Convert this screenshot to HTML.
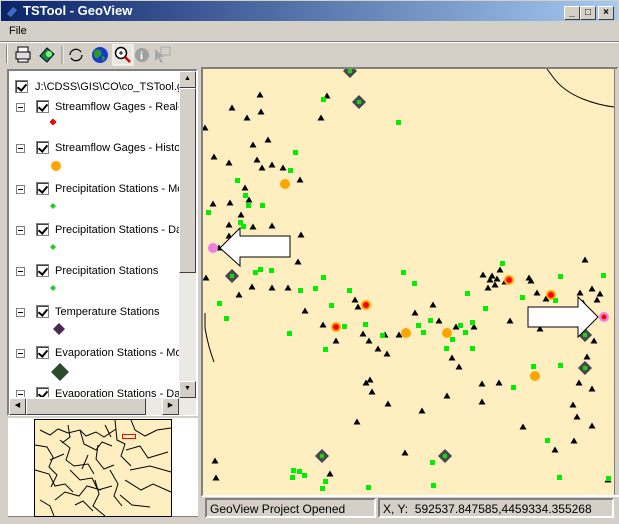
<!DOCTYPE html>
<html><head><style>
*{margin:0;padding:0;box-sizing:border-box}
body{width:619px;height:524px;background:#d4d0c8;font-family:"Liberation Sans",sans-serif;font-size:11px;position:relative;overflow:hidden}
.abs{position:absolute}
.title{left:0;top:0;width:619px;height:22px;background:linear-gradient(90deg,#0a246a,#a6caf0);border:1px solid #d4d0c8}
.title span{position:absolute;left:22px;top:2px;color:#fff;font-weight:bold;font-size:13px}
.wb{top:5px;width:16px;height:14px;background:#d4d0c8;border:1px solid;border-color:#fff #404040 #404040 #fff;font-size:10px;text-align:center;line-height:12px;font-weight:bold}
.sunk{border:2px solid;border-color:#808080 #fff #fff #808080}
.cb{width:13px;height:13px;border:1px solid #808080;background:#fff;box-shadow:inset 1px 1px #404040}
.cb:after{content:"";position:absolute;left:3px;top:1px;width:4px;height:7px;border:solid #000;border-width:0 2px 2px 0;transform:rotate(40deg)}
.ex{width:9px;height:9px;border:1px solid #808080;background:#fff}
.ex:after{content:"";position:absolute;left:1px;top:3px;width:5px;height:1px;background:#000}
.lbl{font-size:11px;white-space:nowrap;color:#000}
</style></head><body>
<div class="abs title"><span>TSTool - GeoView</span>
<svg class="abs" style="left:3px;top:3px" width="16" height="16"><polygon points="2,10 9,2 14,6 7,14" fill="#3a6ad0" stroke="#123" stroke-width="1"/></svg>
<div class="abs wb" style="left:563px">_</div><div class="abs wb" style="left:579px">□</div><div class="abs wb" style="left:597px">×</div>
</div>
<div class="abs" style="left:9px;top:25px;font-size:11px">File</div>
<div class="abs" style="left:0;top:41px;width:619px;height:2px;border-top:1px solid #808080;border-bottom:1px solid #fff"></div>
<div class="abs" style="left:6px;top:45px;width:2px;height:18px;border-left:1px solid #808080;border-right:1px solid #fff"></div>
<svg class="abs" style="left:14px;top:44px" width="160" height="22">
<rect x="2" y="8" width="14" height="7" fill="#ddd" stroke="#000"/><rect x="4" y="3" width="10" height="5" fill="#fff" stroke="#000"/><rect x="4" y="15" width="10" height="3" fill="#fff" stroke="#000"/>
<polygon points="26,12 33,4 40,10 33,18" fill="#1a8a3a" stroke="#003" /><circle cx="35" cy="10" r="3" fill="#7f7"/>
<line x1="48" y1="2" x2="48" y2="20" stroke="#808080"/><line x1="49" y1="2" x2="49" y2="20" stroke="#fff"/>
<path d="M56 11 a6 6 0 0 1 11 -3 M68 11 a6 6 0 0 1 -11 3" fill="none" stroke="#000" stroke-width="1.3"/>
<circle cx="86" cy="11" r="8" fill="#1a3ad0"/><path d="M80 7 q4 -3 7 0 q2 4 -2 6 q-3 3 -5 -1z M88 12 q3 0 3 3 l-3 2z" fill="#2a9a2a"/>
<rect x="99" y="0" width="20" height="21" fill="#e8e6e0" stroke="#fff"/><circle cx="107" cy="9" r="5.5" fill="#fff" stroke="#000" stroke-width="1.5"/><path d="M105 9h4M107 7v4" stroke="#000"/><line x1="111" y1="13" x2="116" y2="18" stroke="#c00" stroke-width="2.5"/>
<circle cx="128" cy="11" r="7" fill="#a0a0a0"/><text x="126" y="15" fill="#fff" font-size="11" font-weight="bold" font-family="Liberation Serif">i</text>
<path d="M141 5 l0 12 l3 -3 l3 5 l2 -1 l-3 -5 l4 0z" fill="#a8a8a8"/><rect x="147" y="3" width="9" height="8" fill="none" stroke="#a8a8a8"/>
</svg>
<!-- tree panel -->
<div class="abs sunk" style="left:7px;top:69px;width:191px;height:347px;background:#fff"></div>
<div class="abs" style="left:179px;top:71px;width:17px;height:327px;background:#ebe9e4"></div>
<div class="abs" style="left:179px;top:71px;width:17px;height:17px;background:#d4d0c8;border:1px solid;border-color:#fff #404040 #404040 #fff;font-size:7px;text-align:center;line-height:14px">▲</div>
<div class="abs" style="left:179px;top:88px;width:17px;height:185px;background:#d4d0c8;border:1px solid;border-color:#fff #404040 #404040 #fff"></div>
<div class="abs" style="left:179px;top:381px;width:17px;height:17px;background:#d4d0c8;border:1px solid;border-color:#fff #404040 #404040 #fff;font-size:7px;text-align:center;line-height:14px">▼</div>
<div class="abs" style="left:9px;top:398px;width:187px;height:17px;background:#ebe9e4"></div>
<div class="abs" style="left:9px;top:398px;width:17px;height:17px;background:#d4d0c8;border:1px solid;border-color:#fff #404040 #404040 #fff;font-size:7px;text-align:center;line-height:14px">◀</div>
<div class="abs" style="left:26px;top:398px;width:120px;height:17px;background:#d4d0c8;border:1px solid;border-color:#fff #404040 #404040 #fff"></div>
<div class="abs" style="left:162px;top:398px;width:17px;height:17px;background:#d4d0c8;border:1px solid;border-color:#fff #404040 #404040 #fff;font-size:7px;text-align:center;line-height:14px">▶</div>
<div class="abs" style="left:9px;top:72px;width:170px;height:325px;overflow:hidden">
<div class="abs cb" style="left:6px;top:8px"></div><div class="abs lbl" style="left:26px;top:9px">J:\CDSS\GIS\CO\co_TSTool.gvp</div>
<div class="abs ex" style="left:7px;top:31px"></div><div class="abs cb" style="left:27px;top:28px"></div><div class="abs lbl" style="left:46px;top:29px">Streamflow Gages - Real-Time</div>
<svg class="abs" style="left:40px;top:46px" width="10" height="10"><rect x="2" y="2" width="4" height="4" fill="#f00"/><rect x="3" y="1" width="2" height="6" fill="#f00"/><rect x="1" y="3" width="6" height="2" fill="#f00"/></svg>
<div class="abs ex" style="left:7px;top:72px"></div><div class="abs cb" style="left:27px;top:69px"></div><div class="abs lbl" style="left:46px;top:70px">Streamflow Gages - Historical</div>
<svg class="abs" style="left:40px;top:88px" width="14" height="14"><circle cx="7" cy="6" r="5" fill="#ffa500"/></svg>
<div class="abs ex" style="left:7px;top:113px"></div><div class="abs cb" style="left:27px;top:110px"></div><div class="abs lbl" style="left:46px;top:111px">Precipitation Stations - Monthly</div>
<svg class="abs" style="left:40px;top:130px" width="10" height="10"><polygon points="4,1 7,4 4,7 1,4" fill="#2c2"/></svg>
<div class="abs ex" style="left:7px;top:154px"></div><div class="abs cb" style="left:27px;top:151px"></div><div class="abs lbl" style="left:46px;top:152px">Precipitation Stations - Daily</div>
<svg class="abs" style="left:40px;top:171px" width="10" height="10"><polygon points="4,1 7,4 4,7 1,4" fill="#2c2"/></svg>
<div class="abs ex" style="left:7px;top:195px"></div><div class="abs cb" style="left:27px;top:192px"></div><div class="abs lbl" style="left:46px;top:193px">Precipitation Stations</div>
<svg class="abs" style="left:40px;top:212px" width="10" height="10"><polygon points="4,1 7,4 4,7 1,4" fill="#2c2"/></svg>
<div class="abs ex" style="left:7px;top:236px"></div><div class="abs cb" style="left:27px;top:233px"></div><div class="abs lbl" style="left:46px;top:234px">Temperature Stations</div>
<svg class="abs" style="left:42px;top:250px" width="16" height="16"><polygon points="8,1 14,7 8,13 2,7" fill="#4a2a50"/></svg>
<div class="abs ex" style="left:7px;top:277px"></div><div class="abs cb" style="left:27px;top:274px"></div><div class="abs lbl" style="left:46px;top:275px">Evaporation Stations - Monthly</div>
<svg class="abs" style="left:41px;top:290px" width="20" height="20"><polygon points="10,1 19,10 10,19 1,10" fill="#2c4a2c"/></svg>
<div class="abs ex" style="left:7px;top:318px"></div><div class="abs cb" style="left:27px;top:315px"></div><div class="abs lbl" style="left:46px;top:316px">Evaporation Stations - Daily</div>
</div>
<!-- overview -->
<div class="abs" style="left:8px;top:418px;width:190px;height:99px;background:#fff;border-bottom:1px solid #808080"></div>
<svg class="abs" style="left:0;top:0" width="200" height="524">
<rect x="34.5" y="419.5" width="137" height="97" fill="#ffefc0" stroke="#000"/>
<g fill="none" stroke="#000" stroke-width="1">
<path d="M40 430 l10 5 l8 -6 l10 4 l12 -3 l6 6 l10 -4 l8 5 l12 -8 M115 420 l2 20 l8 4 l-4 12 l10 10 M131 420 l4 10 l10 6 l12 -6 l14 -2 M126 450 l14 -4 l8 12 l20 -6 M130 470 l20 -4 l21 6 M125 480 l16 10 l12 -6 l18 8 M120 495 l12 10 l18 2 M35 445 l12 2 l6 10 l-4 10 l8 8 l-6 12 M60 440 l10 8 l-4 12 l8 6 l14 -2 l6 10 M80 430 l4 14 l12 6 l6 -8 l10 4 M98 445 l-2 14 l8 10 l10 -4 M35 470 l14 4 l6 12 l10 -2 l8 8 M55 500 l10 -8 l14 4 l8 -10 l14 4 M70 470 l10 10 l12 -2 l6 12 l14 -4 M95 480 l4 14 l-6 12 l12 10 M40 500 l10 6 l4 10 M75 505 l8 -4 l10 10 M110 470 l8 14 l-4 12 l8 10 M50 460 l14 -6 M88 455 l-6 14 M105 425 l6 12 M68 425 l2 12 l-8 6"/>
</g>
<rect x="122.5" y="434.5" width="13" height="4" fill="none" stroke="#f00"/>
</svg>
<!-- map -->
<div class="abs sunk" style="left:201px;top:67px;width:418px;height:430px;background:#ffefc0"></div>
<div class="abs" style="left:614px;top:69px;width:5px;height:426px;background:#d4d0c8;border-left:1px solid #808080"></div>
<svg class="abs" style="left:203px;top:69px" width="411" height="426" viewBox="203 69 411 426">
<defs>
<polygon id="t" points="0,-3.5 3.5,2.5 -3.5,2.5" fill="#000"/>
<rect id="g" x="-2" y="-2" width="5" height="5" fill="#0e0"/>
<g id="d"><polygon points="0,-7 7,0 0,7 -7,0" fill="#4a3a50"/><polygon points="0,-5 5,0 0,5 -5,0" fill="#3c5a3c"/><rect x="-2" y="-2" width="4" height="4" fill="#2c2"/></g>
<g id="r"><circle r="5" fill="#ffa500"/><circle r="3" fill="#f00"/></g>
</defs>
<path d="M547 69 l6 8 q10 14 30 22 q15 6 31 8" fill="none" stroke="#000"/>
<path d="M205 313 l0 15 q3 18 9 34" fill="none" stroke="#000"/>
<g>
<use href="#t" x="232" y="108"/><use href="#t" x="261" y="112"/><use href="#t" x="247" y="118"/><use href="#t" x="205" y="128"/><use href="#t" x="268" y="140"/><use href="#t" x="253" y="145"/><use href="#t" x="257" y="160"/><use href="#t" x="262" y="168"/><use href="#t" x="214" y="157"/><use href="#t" x="229" y="163"/><use href="#t" x="272" y="165"/><use href="#t" x="245" y="188"/><use href="#t" x="249" y="200"/><use href="#t" x="241" y="215"/><use href="#t" x="229" y="225"/><use href="#t" x="229" y="236"/><use href="#t" x="219" y="248"/><use href="#t" x="253" y="227"/><use href="#t" x="272" y="226"/><use href="#t" x="271" y="244"/><use href="#t" x="206" y="278"/><use href="#t" x="252" y="287"/><use href="#t" x="239" y="295"/><use href="#t" x="272" y="288"/><use href="#t" x="305" y="311"/><use href="#t" x="358" y="307"/><use href="#t" x="323" y="325"/><use href="#t" x="363" y="334"/><use href="#t" x="369" y="341"/><use href="#t" x="385" y="335"/><use href="#t" x="387" y="354"/><use href="#t" x="378" y="349"/><use href="#t" x="336" y="341"/><use href="#t" x="355" y="300"/><use href="#t" x="298" y="262"/><use href="#t" x="288" y="288"/><use href="#t" x="433" y="305"/><use href="#t" x="415" y="313"/><use href="#t" x="399" y="335"/><use href="#t" x="439" y="321"/><use href="#t" x="456" y="327"/><use href="#t" x="474" y="327"/><use href="#t" x="483" y="275"/><use href="#t" x="490" y="280"/><use href="#t" x="495" y="285"/><use href="#t" x="500" y="270"/><use href="#t" x="505" y="282"/><use href="#t" x="488" y="288"/><use href="#t" x="492" y="276"/><use href="#t" x="497" y="279"/><use href="#t" x="529" y="278"/><use href="#t" x="537" y="293"/><use href="#t" x="531" y="281"/><use href="#t" x="546" y="299"/><use href="#t" x="580" y="293"/><use href="#t" x="592" y="289"/><use href="#t" x="597" y="300"/><use href="#t" x="600" y="294"/><use href="#t" x="583" y="303"/><use href="#t" x="593" y="317"/><use href="#t" x="571" y="310"/><use href="#t" x="594" y="341"/><use href="#t" x="587" y="357"/><use href="#t" x="579" y="383"/><use href="#t" x="592" y="389"/><use href="#t" x="573" y="405"/><use href="#t" x="577" y="417"/><use href="#t" x="574" y="441"/><use href="#t" x="540" y="329"/><use href="#t" x="585" y="260"/><use href="#t" x="510" y="321"/><use href="#t" x="422" y="411"/><use href="#t" x="388" y="404"/><use href="#t" x="366" y="383"/><use href="#t" x="370" y="380"/><use href="#t" x="447" y="396"/><use href="#t" x="459" y="367"/><use href="#t" x="482" y="384"/><use href="#t" x="482" y="402"/><use href="#t" x="499" y="383"/><use href="#t" x="215" y="461"/><use href="#t" x="216" y="478"/><use href="#t" x="330" y="474"/><use href="#t" x="405" y="453"/><use href="#t" x="555" y="450"/><use href="#t" x="608" y="480"/><use href="#t" x="523" y="427"/><use href="#t" x="592" y="426"/><use href="#t" x="260" y="95"/><use href="#t" x="327" y="96"/><use href="#t" x="321" y="118"/><use href="#t" x="283" y="168"/><use href="#t" x="300" y="180"/><use href="#t" x="301" y="235"/><use href="#t" x="213" y="204"/><use href="#t" x="230" y="203"/><use href="#t" x="357" y="422"/><use href="#t" x="372" y="392"/><use href="#t" x="452" y="358"/>
</g>
<g>
<use href="#g" x="208" y="212"/><use href="#g" x="237" y="180"/><use href="#g" x="245" y="195"/><use href="#g" x="248" y="205"/><use href="#g" x="240" y="222"/><use href="#g" x="243" y="226"/><use href="#g" x="260" y="269"/><use href="#g" x="262" y="205"/><use href="#g" x="271" y="270"/><use href="#g" x="255" y="272"/><use href="#g" x="295" y="152"/><use href="#g" x="290" y="170"/><use href="#g" x="323" y="99"/><use href="#g" x="398" y="122"/><use href="#g" x="219" y="303"/><use href="#g" x="226" y="318"/><use href="#g" x="289" y="333"/><use href="#g" x="300" y="290"/><use href="#g" x="315" y="288"/><use href="#g" x="323" y="277"/><use href="#g" x="325" y="349"/><use href="#g" x="349" y="290"/><use href="#g" x="344" y="326"/><use href="#g" x="403" y="272"/><use href="#g" x="414" y="283"/><use href="#g" x="467" y="293"/><use href="#g" x="472" y="322"/><use href="#g" x="465" y="332"/><use href="#g" x="460" y="325"/><use href="#g" x="430" y="320"/><use href="#g" x="423" y="332"/><use href="#g" x="452" y="339"/><use href="#g" x="446" y="348"/><use href="#g" x="472" y="348"/><use href="#g" x="485" y="308"/><use href="#g" x="502" y="263"/><use href="#g" x="522" y="297"/><use href="#g" x="560" y="276"/><use href="#g" x="560" y="365"/><use href="#g" x="533" y="366"/><use href="#g" x="513" y="387"/><use href="#g" x="603" y="275"/><use href="#g" x="293" y="470"/><use href="#g" x="299" y="471"/><use href="#g" x="304" y="475"/><use href="#g" x="292" y="477"/><use href="#g" x="325" y="481"/><use href="#g" x="322" y="488"/><use href="#g" x="368" y="487"/><use href="#g" x="432" y="462"/><use href="#g" x="433" y="485"/><use href="#g" x="559" y="477"/><use href="#g" x="547" y="440"/><use href="#g" x="608" y="478"/><use href="#g" x="555" y="300"/><use href="#g" x="382" y="335"/><use href="#g" x="365" y="324"/><use href="#g" x="418" y="325"/><use href="#g" x="331" y="305"/>
</g>
<use href="#d" x="359" y="102"/><use href="#d" x="232" y="276"/><use href="#d" x="585" y="335"/><use href="#d" x="585" y="368"/><use href="#d" x="322" y="456"/><use href="#d" x="445" y="456"/><use href="#d" x="350" y="71"/>
<circle cx="285" cy="184" r="5" fill="#ffa500"/><circle cx="406" cy="333" r="5" fill="#ffa500"/><circle cx="447" cy="333" r="5" fill="#ffa500"/><circle cx="535" cy="376" r="5" fill="#ffa500"/>
<use href="#r" x="366" y="305"/><use href="#r" x="336" y="327"/><use href="#r" x="509" y="280"/><use href="#r" x="551" y="295"/>
<circle cx="213" cy="248" r="5" fill="#f080e0"/><circle cx="604" cy="317" r="5" fill="#f080e0"/><circle cx="604" cy="317" r="2.5" fill="#f00"/>
<polygon points="220,248 240,228 240,236 290,236 290,257 240,257 240,266" fill="#fff" stroke="#000"/>
<polygon points="598,317 578,297 578,307 528,307 528,327 578,327 578,337" fill="#fff" stroke="#000"/>
</svg>
<!-- status -->
<div class="abs sunk" style="left:205px;top:498px;width:171px;height:20px;padding:2px 3px;font-size:12px;line-height:14px">GeoView Project Opened</div>
<div class="abs sunk" style="left:378px;top:498px;width:236px;height:20px;padding:2px 3px;font-size:12px;line-height:14px">X, Y:&nbsp; 592537.847585,4459334.355268</div>
</body></html>
